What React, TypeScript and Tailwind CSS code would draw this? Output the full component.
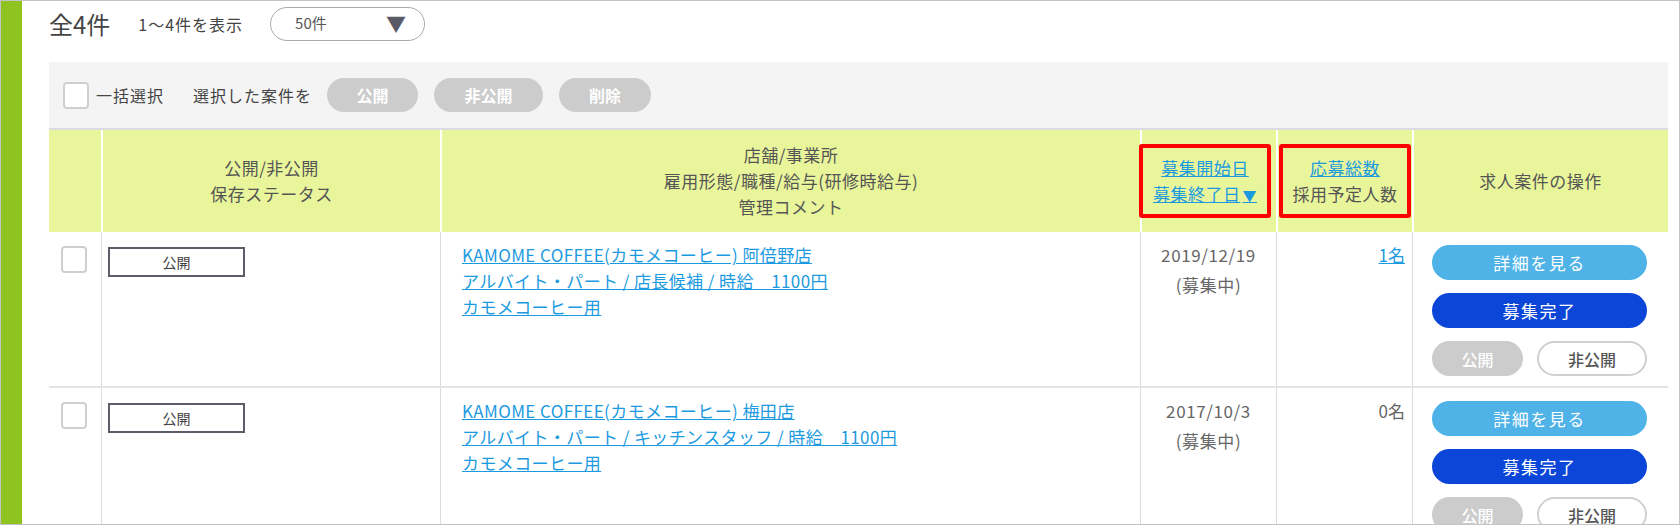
import React from 'react';

interface Job {
  store: string;
  job: string;
  comment: string;
  date: string;
  count: string;
  hasApplicants: boolean;
}

const jobs: Job[] = [
  {
    store: 'KAMOME COFFEE(カモメコーヒー) 阿倍野店',
    job: 'アルバイト・パート / 店長候補 / 時給　1100円',
    comment: 'カモメコーヒー用',
    date: '2019/12/19',
    count: '1名',
    hasApplicants: true,
  },
  {
    store: 'KAMOME COFFEE(カモメコーヒー) 梅田店',
    job: 'アルバイト・パート / キッチンスタッフ / 時給　1100円',
    comment: 'カモメコーヒー用',
    date: '2017/10/3',
    count: '0名',
    hasApplicants: false,
  },
];

const cols = 'grid grid-cols-[52px_339px_700px_136px_136px_255px]';

const Checkbox: React.FC = () => (
  <div className="w-[26px] h-[27px] rounded-[4px] border-2 border-[#cfcfcf] bg-white" />
);

const JobRow: React.FC<{ job: Job }> = ({ job }) => {
  return (
    <div className={`${cols} h-[156px] border-b-2 border-[#e3e3e3] shrink-0`}>
      <div className="pl-[12px] pt-[14px]">
        <Checkbox />
      </div>
      <div className="border-l border-[#dcdcdc] pl-[6px] pt-[15px]">
        <div className="w-[137px] h-[30px] border-2 border-[#5d5d6a] flex items-center justify-center text-[14px] text-[#444]">
          公開
        </div>
      </div>
      <div className="border-l border-[#dcdcdc] pl-[21px] pt-[10px] flex flex-col items-start text-[17px] leading-[26px] tracking-[0.4px] text-[#1c9ae0]">
        <a className="underline">{job.store}</a>
        <a className="underline">{job.job}</a>
        <a className="underline">{job.comment}</a>
      </div>
      <div className="border-l border-[#dcdcdc] pt-[8px] text-center text-[17px] leading-[30px] tracking-[0.6px] text-[#666]">
        <div>{job.date}</div>
        <div>(募集中)</div>
      </div>
      <div className="border-l border-[#dcdcdc] pt-[8px] pr-[7px] text-right text-[17px] leading-[30px]">
        {job.hasApplicants ? (
          <a className="underline text-[#1c9ae0]">{job.count}</a>
        ) : (
          <span className="text-[#666]">{job.count}</span>
        )}
      </div>
      <div className="border-l border-[#dcdcdc] pl-[19px] pt-[13px] flex flex-col gap-[13px]">
        <button className="w-[215px] h-[35px] rounded-full bg-[#4fb3e8] text-white text-[17px] tracking-[1.5px]">
          詳細を見る
        </button>
        <button className="w-[215px] h-[35px] rounded-full bg-[#0b46d8] text-white text-[17px] tracking-[1.5px]">
          募集完了
        </button>
        <div className="flex gap-[14px]">
          <button className="w-[91px] h-[35px] rounded-full bg-[#cccccc] text-white text-[16px] font-medium">
            公開
          </button>
          <button className="w-[110px] h-[35px] rounded-full border-2 border-[#cfcfcf] bg-white text-[#555] text-[16px] font-medium">
            非公開
          </button>
        </div>
      </div>
    </div>
  );
};

const App: React.FC = () => {
  return (
    <div className="w-[1680px] h-[525px] flex overflow-hidden bg-white border border-[#c4c4c4] font-['Noto_Sans_CJK_JP',sans-serif] text-[#555]">
      <div className="w-[21px] shrink-0 bg-[#8fc31f]" />

      <div className="flex-1 pl-[27px] pr-[11px] flex flex-col">
        <div className="h-[45px] flex items-center shrink-0">
          <span className="text-[24px] text-[#444]">全4件</span>
          <span className="ml-[28px] text-[16px] tracking-[1px] text-[#444]">1〜4件を表示</span>
          <div className="ml-[27px] w-[155px] h-[34px] rounded-full border border-[#aaa] flex items-center pl-[24px] pr-[18px]">
            <span className="text-[15px] text-[#555]">50件</span>
            <span className="ml-auto text-[20px] leading-none text-[#5a5a66]">▼</span>
          </div>
        </div>

        <div className="mt-[16px] h-[68px] shrink-0 bg-[#f4f4f4] flex items-center pl-[14px] border-b-2 border-[#dadce2]">
          <Checkbox />
          <span className="ml-[7px] text-[16px] tracking-[1px] text-[#444]">一括選択</span>
          <span className="ml-[29px] text-[16px] tracking-[1px] text-[#444]">選択した案件を</span>
          <div className="ml-[15px] flex gap-[16px]">
            <button className="w-[91px] h-[34px] rounded-full bg-[#cccccc] text-white text-[16px] font-bold">公開</button>
            <button className="w-[109px] h-[34px] rounded-full bg-[#cccccc] text-white text-[16px] font-bold">非公開</button>
            <button className="w-[92px] h-[34px] rounded-full bg-[#cccccc] text-white text-[16px] font-bold">削除</button>
          </div>
        </div>

        <div className={`${cols} h-[102px] shrink-0 bg-[#e9f59b] text-[17px] leading-[26px] tracking-[0.5px] text-[#555]`}>
          <div />
          <div className="border-l-2 border-white flex flex-col items-center justify-center">
            <div>公開/非公開</div>
            <div>保存ステータス</div>
          </div>
          <div className="border-l-2 border-white flex flex-col items-center justify-center">
            <div>店舗/事業所</div>
            <div>雇用形態/職種/給与(研修時給与)</div>
            <div>管理コメント</div>
          </div>
          <div className="border-l-2 border-white flex items-center justify-start">
            <div className="-ml-[3px] w-[132px] h-[74px] border-4 border-[#ff0000] rounded-[3px] flex flex-col items-center justify-center">
              <a className="underline text-[#1c9ae0]">募集開始日</a>
              <a className="underline text-[#1c9ae0]">
                募集終了日<span className="ml-[2px] text-[14px]">▼</span>
              </a>
            </div>
          </div>
          <div className="border-l-2 border-white flex items-center justify-center">
            <div className="w-[132px] h-[74px] border-4 border-[#ff0000] rounded-[3px] flex flex-col items-center justify-center">
              <a className="underline text-[#1c9ae0]">応募総数</a>
              <span>採用予定人数</span>
            </div>
          </div>
          <div className="border-l-2 border-white flex items-center justify-center">求人案件の操作</div>
        </div>

        {jobs.map((job) => (
          <JobRow key={job.date} job={job} />
        ))}
      </div>
    </div>
  );
};

export default App;
